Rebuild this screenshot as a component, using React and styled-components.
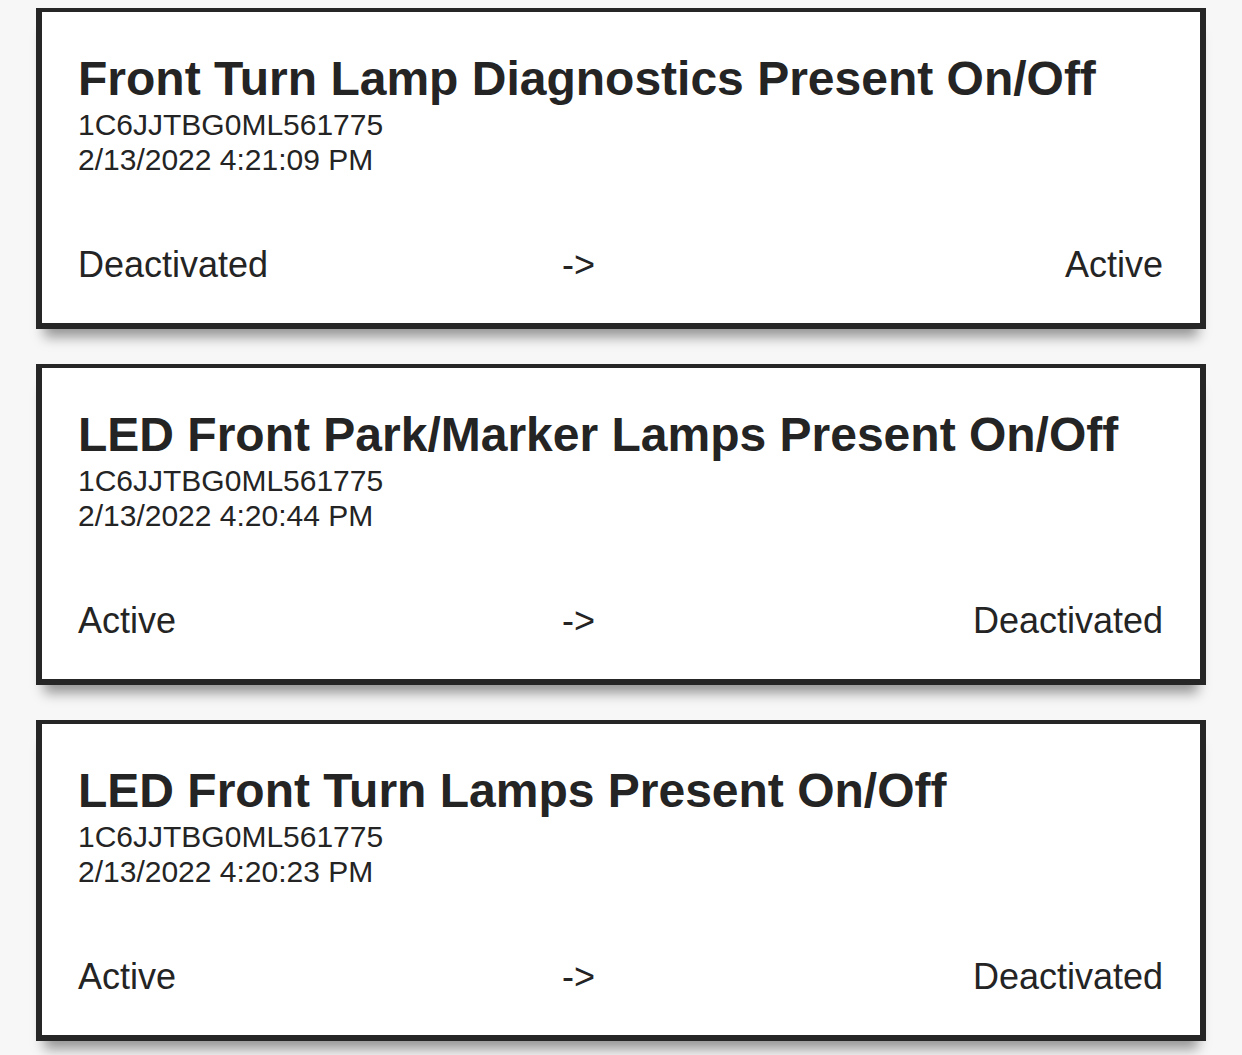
import styled, { createGlobalStyle } from "styled-components";

const GlobalStyle = createGlobalStyle`
  html, body {
    margin: 0;
    padding: 0;
    background: #f7f7f7;
  }
  body {
    font-family: "Liberation Sans", Arial, Helvetica, sans-serif;
    color: #242424;
  }
`;

const List = styled.div`
  display: flex;
  flex-direction: column;
  gap: 35px;
  padding: 8px 36px 40px;
`;

const Card = styled.div`
  background: #fff;
  border: 6px solid #262626;
  border-top-width: 4px;
  padding: 39px 37px 38px 36px;
  display: flex;
  flex-direction: column;
  box-shadow: 0 16px 12px -8px rgba(0, 0, 0, 0.4);
`;

const Title = styled.div`
  font-size: 48px;
  font-weight: bold;
  line-height: 56px;
  white-space: nowrap;
`;

const Meta = styled.div`
  font-size: 30px;
  line-height: 35px;
`;

const StateRow = styled.div`
  display: grid;
  grid-template-columns: 46fr auto 54fr;
  align-items: center;
  margin-top: 68px;
  font-size: 36px;
  line-height: 40px;
`;

const State = styled.span`
  text-align: ${(p) => (p.$end ? "right" : "left")};
`;

const events = [
  {
    name: "Front Turn Lamp Diagnostics Present On/Off",
    vin: "1C6JJTBG0ML561775",
    time: "2/13/2022 4:21:09 PM",
    from: "Deactivated",
    to: "Active",
  },
  {
    name: "LED Front Park/Marker Lamps Present On/Off",
    vin: "1C6JJTBG0ML561775",
    time: "2/13/2022 4:20:44 PM",
    from: "Active",
    to: "Deactivated",
  },
  {
    name: "LED Front Turn Lamps Present On/Off",
    vin: "1C6JJTBG0ML561775",
    time: "2/13/2022 4:20:23 PM",
    from: "Active",
    to: "Deactivated",
  },
];

export default function App() {
  return (
    <>
      <GlobalStyle />
      <List>
        {events.map((e) => (
          <Card key={e.time}>
            <Title>{e.name}</Title>
            <Meta>{e.vin}</Meta>
            <Meta>{e.time}</Meta>
            <StateRow>
              <State>{e.from}</State>
              <span>-&gt;</span>
              <State $end>{e.to}</State>
            </StateRow>
          </Card>
        ))}
      </List>
    </>
  );
}
